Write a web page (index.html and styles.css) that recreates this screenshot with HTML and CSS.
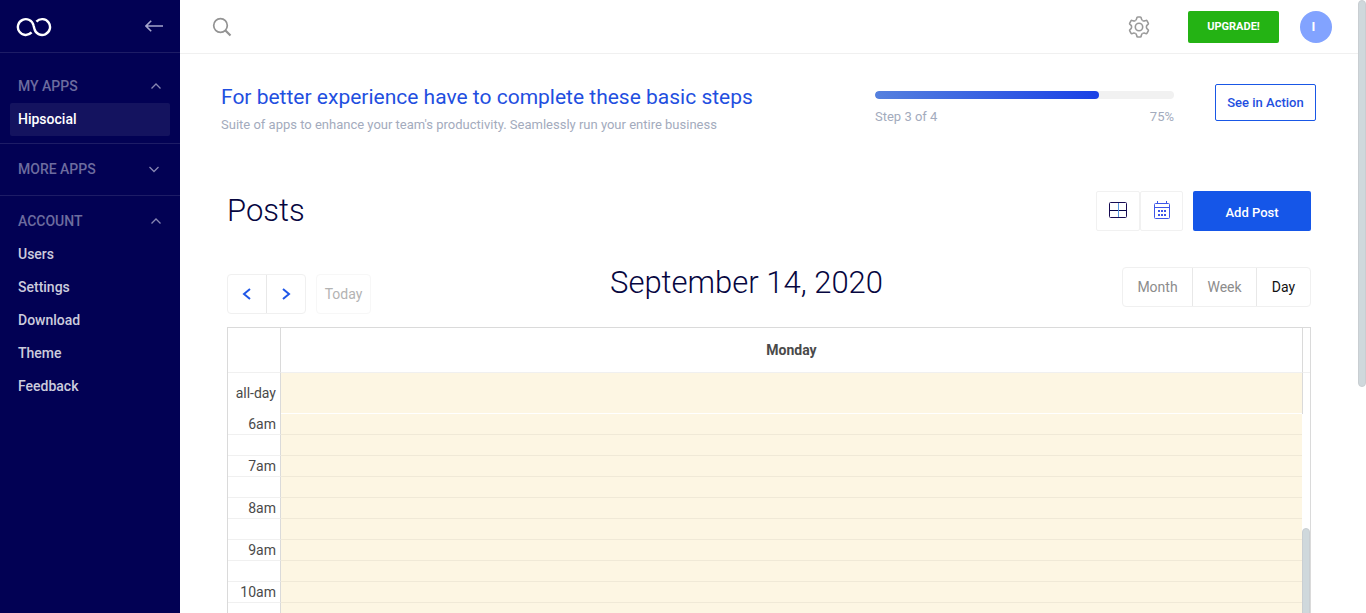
FILE: index.html
```html
<!DOCTYPE html>
<html lang="en">
<head>
<meta charset="utf-8">
<title>Posts</title>
<link rel="stylesheet" href="styles.css">
</head>
<body>
<div class="app">
  <aside class="sidebar">
    <div class="brand">
      <svg class="logo" width="36" height="20" viewBox="0 0 36 20" fill="none" stroke="#fff" stroke-width="2.4" role="img" aria-label="Logo">
        <path d="M15.6 15.4A7.900 7.900 0 1 1 17.500 8.300Q18 10 18.400 11.700A7.900 7.900 0 1 0 20.400 4.600"/>
      </svg>
      <button class="icon-btn" aria-label="Collapse menu">
        <svg width="18" height="12" viewBox="0 0 18 12" fill="none" stroke="#a5a5cc" stroke-width="1.6"><path d="M18 6H1.2M6.2 .8L1 6l5.2 5.2"/></svg>
      </button>
    </div>
    <nav>
      <section class="group group-first">
        <button class="group-head">MY APPS
          <svg width="12" height="8" viewBox="0 0 12 8"><path d="M1.500 6.500L6 2l4.500 4.500"/></svg>
        </button>
        <a class="item active" href="#">Hipsocial</a>
      </section>
      <section class="group">
        <button class="group-head more">MORE APPS
          <svg width="12" height="8" viewBox="0 0 12 8"><path d="M1.500 2L6 6.500 10.500 2"/></svg>
        </button>
      </section>
      <section class="group group-last">
        <button class="group-head">ACCOUNT
          <svg width="12" height="8" viewBox="0 0 12 8"><path d="M1.500 6.500L6 2l4.500 4.500"/></svg>
        </button>
        <a class="item" href="#">Users</a>
        <a class="item" href="#">Settings</a>
        <a class="item" href="#">Download</a>
        <a class="item" href="#">Theme</a>
        <a class="item" href="#">Feedback</a>
      </section>
    </nav>
  </aside>

  <main class="main">
    <header class="topbar">
      <button class="icon-btn search" aria-label="Search">
        <svg width="20" height="20" viewBox="0 0 20 20" fill="none" stroke="#939393"><circle cx="8.500" cy="8.500" r="6.800" stroke-width="1.7"/><path d="M13.200 13.200l5.300 5.300" stroke-width="2.200"/></svg>
      </button>
      <button class="icon-btn" aria-label="Settings">
        <svg width="22" height="22" viewBox="-11 -11 22 22" fill="none" stroke="#999" stroke-width="1.6">
          <defs><path id="tooth" d="M-3.700-6.400Q-2.500-7.100-2.400-8.200L-2.200-9.200Q-2.100-10-1.200-10H1.200Q2.100-10 2.200-9.200L2.400-8.200Q2.500-7.100 3.700-6.400"/></defs>
          <circle r="3.700"/>
          <use href="#tooth"/><use href="#tooth" transform="rotate(60)"/><use href="#tooth" transform="rotate(120)"/><use href="#tooth" transform="rotate(180)"/><use href="#tooth" transform="rotate(240)"/><use href="#tooth" transform="rotate(300)"/>
        </svg>
      </button>
      <button class="upgrade">UPGRADE!</button>
      <button class="avatar" aria-label="Account"><span>I</span></button>
    </header>

    <section class="banner">
      <div class="banner-text">
        <h2>For better experience have to complete these basic steps</h2>
        <p>Suite of apps to enhance your team's productivity. Seamlessly run your entire business</p>
      </div>
      <div class="progress">
        <div class="track"><div class="fill" style="width:75%"></div></div>
        <div class="progress-labels"><span>Step 3 of 4</span><span>75%</span></div>
      </div>
      <button class="see">See in Action</button>
    </section>

    <section class="content">
      <div class="page-head">
        <h1>Posts</h1>
        <div class="views">
          <button aria-label="Grid view">
            <svg width="20" height="18" viewBox="0 0 20 18" fill="none"><rect x="1.500" y="1.500" width="17" height="15" rx="1" stroke="#170b52"/><path d="M2 9.500h16" stroke="#06064b"/><path d="M10.500 2v14" stroke="#5597dd"/></svg>
          </button>
          <button aria-label="Calendar view">
            <svg width="18" height="20" viewBox="0 0 18 20" fill="none" stroke="#3d56e8"><rect x="1.500" y="3.500" width="15" height="15" rx="1"/><path d="M2 7.500h14M4.500 1v3M13.500 1v3"/><path d="M5 11h2M8 11h2M11 11h2M5 15h2M8 15h2M11 15h2" stroke-width="2"/></svg>
          </button>
        </div>
        <button class="add">Add Post</button>
      </div>

      <div class="toolbar">
        <div class="tool-left">
          <div class="seg nav-seg">
            <button aria-label="Previous day"><svg width="10" height="12" viewBox="0 0 10 12"><path d="M8 1L2 6l6 5"/></svg></button>
            <button aria-label="Next day"><svg width="10" height="12" viewBox="0 0 10 12"><path d="M2 1l6 5-6 5"/></svg></button>
          </div>
          <button class="today" disabled>Today</button>
        </div>
        <h2>September 14, 2020</h2>
        <div class="seg range">
          <button>Month</button><button>Week</button><button class="on">Day</button>
        </div>
      </div>

      <div class="calendar">
        <table class="cal-head">
          <tr class="days"><td class="axis"></td><th scope="col">Monday</th><td class="gutter"></td></tr>
          <tr class="allday"><th class="axis" scope="row">all-day</th><td class="slot"></td><td class="gutter"></td></tr>
        </table>
        <div class="cal-body">
          <table>
            <tr><th class="axis" scope="row">6am</th><td class="slot"></td></tr>
            <tr><td class="axis"></td><td class="slot"></td></tr>
            <tr><th class="axis" scope="row">7am</th><td class="slot"></td></tr>
            <tr><td class="axis"></td><td class="slot"></td></tr>
            <tr><th class="axis" scope="row">8am</th><td class="slot"></td></tr>
            <tr><td class="axis"></td><td class="slot"></td></tr>
            <tr><th class="axis" scope="row">9am</th><td class="slot"></td></tr>
            <tr><td class="axis"></td><td class="slot"></td></tr>
            <tr><th class="axis" scope="row">10am</th><td class="slot"></td></tr>
            <tr><td class="axis"></td><td class="slot"></td></tr>
          </table>
          <div class="cal-rail"><div class="thumb"></div></div>
        </div>
      </div>
    </section>
  </main>
  <div class="page-rail"><div class="thumb"></div></div>
</div>
</body>
</html>
```
FILE: styles.css
```css
* { box-sizing: border-box; }
body { margin: 0; font-family: Roboto, "Liberation Sans", sans-serif; font-size: 14px; color: #4a4a4a; background: #fff; }
button { font: inherit; color: inherit; background: none; border: 0; padding: 0; margin: 0; cursor: pointer; }
h1, h2, p { margin: 0; }
a { text-decoration: none; color: inherit; }
svg { display: block; }
.app { display: flex; height: 100vh; overflow: hidden; }

.sidebar { flex: 0 0 180px; background: #020154; }
.brand { display: flex; align-items: center; justify-content: space-between; height: 53px; padding: 0 17px 0 16px; border-bottom: 1px solid #1d1c66; }
.logo { margin-top: 2px; }
.group { padding: 9px 10px; border-bottom: 1px solid #1d1c66; }
.group-first { padding-top: 17px; padding-bottom: 7px; }
.group-last { border-bottom: 0; }
.group-head { display: flex; align-items: center; justify-content: space-between; width: 100%; height: 33px; padding: 0 8px 2px; font-weight: 500; color: #6d6c9f; }
.group-head.more { padding-right: 10px; }
.group-head svg { fill: none; stroke: #8786b2; stroke-width: 1.3; }
.item { display: block; height: 33px; line-height: 33px; padding: 0 8px; font-weight: 500; color: #ccccdd; border-radius: 2px; }
.item.active { background: #14135f; color: #fff; }

.main { flex: 1; min-width: 0; }
.topbar { display: flex; align-items: center; height: 54px; padding: 0 26px 0 32px; border-bottom: 1px solid #f0f0f0; }
.search { margin-right: auto; }
.upgrade { width: 91px; height: 32px; margin: 0 21px 0 38px; border-radius: 2px; background: #24b314; color: #fff; font-size: 11px; font-weight: 700; }
.avatar { width: 32px; height: 32px; padding-right: 5px; border-radius: 50%; background: #82a3ff; color: #fff; font-size: 13px; font-weight: 700; }

.banner { display: flex; align-items: flex-start; padding: 30px 42px 0 41px; }
.banner-text { flex: 1; }
.banner h2 { font-size: 21px; line-height: 26px; font-weight: 400; color: #1f4fe0; }
.banner p { margin-top: 6px; font-size: 13px; line-height: 18px; color: #a3abbd; }
.progress { width: 299px; margin: 7px 41px 0 0; }
.track { height: 8px; border-radius: 4px; background: #f1f1f1; overflow: hidden; }
.fill { height: 8px; border-radius: 4px; background: linear-gradient(90deg, #5580de, #1a41e6); }
.progress-labels { display: flex; justify-content: space-between; margin-top: 9px; font-size: 13px; line-height: 18px; color: #a3abbd; }
.see { width: 101px; height: 37px; border: 1px solid #1957e6; border-radius: 2px; color: #1f4fe0; font-size: 13px; font-weight: 500; }

.content { padding: 57px 47px 0; }
.page-head { display: flex; align-items: center; height: 40px; }
h1, .toolbar h2 { font-size: 31px; line-height: 38px; font-weight: 300; color: #06063f; }
.page-head h1 { flex: 1; }
.views { display: flex; }
.views button { display: grid; place-items: center; width: 44px; height: 40px; padding-bottom: 2px; border: 1px solid #f1f1f1; border-radius: 2px; }
.views button + button { width: 43px; }
.add { width: 118px; height: 40px; margin-left: 10px; border-radius: 2px; background: #1556e8; color: #fff; font-size: 13px; font-weight: 500; padding-top: 2px; }

.toolbar { display: grid; grid-template-columns: 1fr auto 1fr; align-items: start; height: 60px; margin-top: 36px; }
.tool-left { display: flex; gap: 10px; padding-top: 7px; }
.toolbar h2 { margin: -3px 0 0 -45px; }
.seg { display: flex; height: 40px; border: 1px solid #f0f0f0; border-radius: 4px; }
.seg button + button { border-left: 1px solid #e8e8e8; }
.nav-seg button { display: grid; place-items: center; width: 38px; }
.nav-seg button + button { width: 39px; }
.nav-seg svg { fill: none; stroke: #1f57e8; stroke-width: 2; }
.today { width: 55px; height: 40px; border: 1px solid #f7f7f7; border-radius: 4px; color: #b3b3b3; }
.range { display: grid; grid-template-columns: 69px 64px 54px; justify-self: end; color: #8c8c8c; }
.range .on { color: #111; }

.calendar { border: 1px solid #dadada; border-bottom: 0; }
table { width: 100%; border-collapse: separate; border-spacing: 0; table-layout: fixed; }
th, td { padding: 0; }
.axis { width: 53px; padding-right: 4px; text-align: right; font-weight: 400; border-right: 1px solid #dadada; }
.gutter { width: 8px; }
.days > * { height: 45px; border-bottom: 1px solid #f0f0f0; }
.days th { font-weight: 700; }
.allday > * { height: 41px; }
.allday .axis { padding-bottom: 2px; }
.cal-head .gutter { border-left: 1px solid #dadada; }
.slot { background: #fdf6e3; }
.allday .slot { border-bottom: 1px solid #fff; }
.cal-body { display: flex; }
.cal-body table { flex: 1; }
.cal-body tr > * { height: 21px; line-height: 18px; border-bottom: 1px solid #f0f0f0; }
.cal-body .slot { border-bottom-color: #f0e9d7; }
.cal-rail { width: 8px; padding-top: 114px; display: flex; flex-direction: column; }
.cal-rail .thumb { flex: 1; }
.thumb { border: 1px solid #c9ced2; border-radius: 4px; background: #cfd8dc; }
.page-rail { flex: 0 0 8px; }
.page-rail .thumb { height: 63.2%; }
```
